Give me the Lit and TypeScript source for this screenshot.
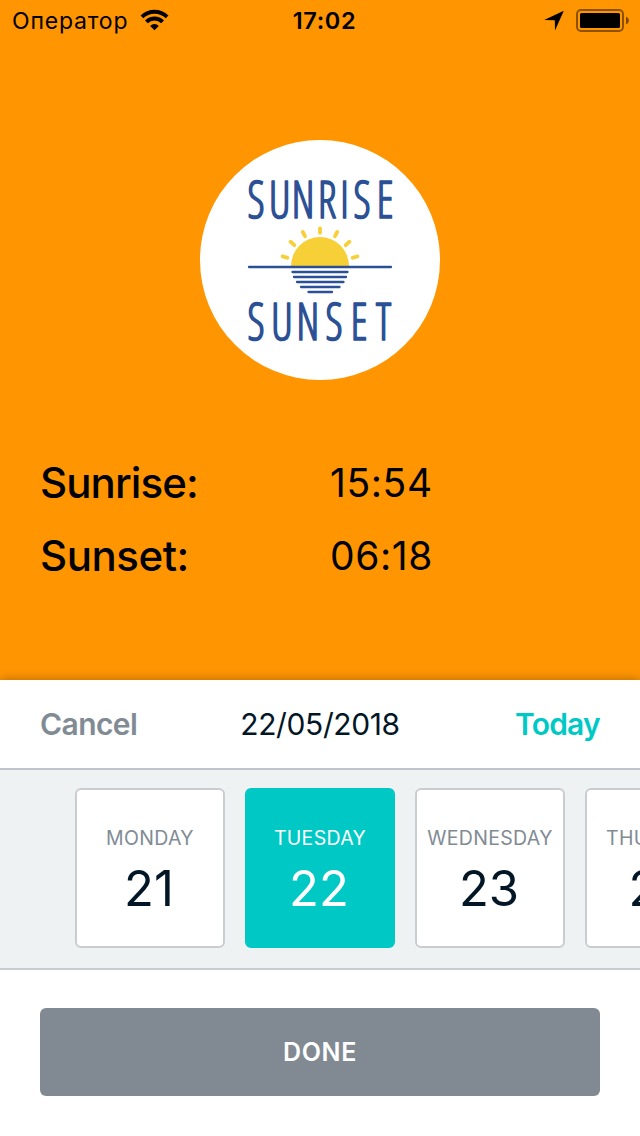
import { LitElement, html, css, svg } from "lit";
import { customElement, property } from "lit/decorators.js";
import { classMap } from "lit/directives/class-map.js";

const base = css`
  :host {
    display: block;
    box-sizing: border-box;
    font-family: Inter, "Noto Sans", sans-serif;
  }
  svg {
    display: block;
  }
`;

@customElement("status-bar")
class StatusBar extends LitElement {
  static styles = [
    base,
    css`
      .bar {
        display: grid;
        grid-template-columns: 1fr auto 1fr;
        align-items: start;
        height: 40px;
        line-height: 42px;
        color: #000;
      }
      .left {
        display: flex;
        gap: 12px;
        padding-left: 12px;
        font-size: 23px;
        letter-spacing: 0.8px;
      }
      .wifi {
        margin-top: 9px;
      }
      .time {
        padding-left: 9px;
        font-size: 23.5px;
        font-weight: 600;
        line-height: 41px;
        letter-spacing: 0.6px;
      }
      .right {
        display: flex;
        justify-content: flex-end;
        gap: 12px;
        padding: 9px 11px 0 0;
      }
    `,
  ];
  render() {
    return html`<div class="bar">
      <div class="left">
        <span>Оператор</span>
        <svg class="wifi" width="29" height="22" viewBox="0 0 29 22">
          <g fill="none" stroke="#000" stroke-width="3.9">
            <path d="M1.9 7.9A18 18 0 0 1 27.1 7.9" />
            <path d="M6.4 12.9A11.2 11.2 0 0 1 22.6 12.9" />
          </g>
          <path d="M10.2 16.9A6 6 0 0 1 18.8 16.9L14.5 21.2Z" />
        </svg>
      </div>
      <div class="time">17:02</div>
      <div class="right">
        <svg width="20" height="22" viewBox="0 0 20 22">
          <path d="M19.8 1.8L11 21.5L10.8 11.2L0.2 11Z" />
        </svg>
        <svg width="53" height="24" viewBox="0 0 53 24">
          <rect x="1" y="1" width="46" height="21" rx="4" fill="none" stroke="#000" stroke-opacity="0.45" stroke-width="2" />
          <rect x="4" y="4" width="40" height="15" rx="1.5" />
          <path d="M50 7.5Q53 9 53 11.5T50 15.5Z" fill-opacity="0.5" />
        </svg>
      </div>
    </div>`;
  }
}

@customElement("sun-logo")
class SunLogo extends LitElement {
  static styles = [
    base,
    css`
      :host {
        width: 240px;
        height: 240px;
        border-radius: 50%;
        background: #fff;
      }
      .word {
        font: 300 condensed 51px "Open Sans", sans-serif;
        fill: #2b5095;
        stroke: #2b5095;
        stroke-width: 1.7px;
        stroke-linejoin: round;
        text-anchor: middle;
      }
      .rays {
        stroke: #f7cf37;
        stroke-width: 3.8;
        stroke-linecap: round;
      }
      .water {
        stroke: #2b5095;
        stroke-width: 2.3;
        stroke-linecap: round;
      }
    `,
  ];
  render() {
    const rays = [
      [120, 88.3, 120, 92.7],
      [102.8, 92, 105, 96.2],
      [137.2, 92, 135, 96.2],
      [90.5, 101.7, 94.3, 105.2],
      [149.5, 101.7, 145.7, 105.2],
      [82.6, 116.4, 87.4, 117.8],
      [157.4, 116.4, 152.6, 117.8],
    ];
    const water = [
      [49, 191, 127],
      [92.5, 147.5, 132],
      [94, 146, 137],
      [97, 143.5, 142],
      [101, 139.5, 147],
      [108.5, 132, 152],
    ];
    // The lettering is narrower than the condensed face, so it is squeezed
    // and each letter is centred on its own position.
    const squeeze = 0.84;
    const xs = (a: number[]) => a.map((v) => (v / squeeze).toFixed(2)).join(" ");
    return html`<svg width="240" height="240" viewBox="0 0 240 240">
      <text class="word" transform="scale(${squeeze} 1)" x=${xs([56, 79.6, 103, 127, 144.5, 162, 185])} y="78.2">SUNRISE</text>
      <g class="rays">
        ${rays.map(([a, b, c, d]) => svg`<line x1=${a} y1=${b} x2=${c} y2=${d}></line>`)}
      </g>
      <path d="M91 126A29 29 0 0 1 149 126Z" fill="#f7cf37" />
      <g class="water">
        ${water.map(([a, b, y]) => svg`<line x1=${a} y1=${y} x2=${b} y2=${y}></line>`)}
      </g>
      <text class="word" transform="scale(${squeeze} 1)" x=${xs([56, 82, 107.7, 134, 159, 183.5])} y="199.8">SUNSET</text>
    </svg>`;
  }
}

@customElement("day-card")
class DayCard extends LitElement {
  @property() name = "";
  @property({ type: Number }) day = 1;
  @property({ type: Boolean }) selected = false;
  static styles = [
    base,
    css`
      .card {
        display: flex;
        flex-direction: column;
        align-items: center;
        gap: 11px;
        box-sizing: border-box;
        width: 150px;
        height: 160px;
        padding-top: 36px;
        border: 2px solid #c9cdd2;
        border-radius: 6px;
        background: #fff;
        color: #031626;
      }
      .name {
        font-size: 19.5px;
        line-height: 24px;
        letter-spacing: 0.32px;
        color: #818b94;
      }
      .day {
        padding-right: 2px;
        font-size: 49px;
        line-height: 56px;
      }
      .on {
        background: #00c9c5;
        border-color: #00c9c5;
        color: #fff;
      }
      .on .name {
        color: #fff;
      }
    `,
  ];
  render() {
    return html`<div class=${classMap({ card: true, on: this.selected })}>
      <span class="name">${this.name}</span>
      <span class="day">${this.day}</span>
    </div>`;
  }
}

@customElement("app-root")
class AppRoot extends LitElement {
  static styles = [
    base,
    css`
      :host {
        display: flex;
        flex-direction: column;
        height: 1136px;
        overflow: hidden;
        background: #ff9500;
      }
      .main {
        display: flex;
        flex-direction: column;
        height: 640px;
      }
      .logo {
        margin: 100px auto 66px;
      }
      .row {
        display: grid;
        grid-template-columns: 290px 1fr;
        height: 73px;
        padding-left: 40px;
        line-height: 74px;
        font-size: 39px;
        letter-spacing: 0.6px;
        color: #000;
      }
      .label {
        font-size: 42px;
        font-weight: 500;
        line-height: 73px;
        letter-spacing: -0.9px;
      }
      .label.wide {
        letter-spacing: -0.45px;
      }
      .sheet {
        height: 456px;
        background: #fff;
        box-shadow: 0 0 10px rgba(0, 0, 0, 0.3);
      }
      .head {
        display: grid;
        grid-template-columns: 1fr auto 1fr;
        height: 88px;
        padding: 0 40px;
        border-bottom: 2px solid #bdc5cb;
        font-size: 30px;
        line-height: 88px;
      }
      .cancel {
        font-weight: 600;
        letter-spacing: -0.6px;
        color: #818b94;
      }
      .date {
        letter-spacing: -0.4px;
        color: #031626;
      }
      .today {
        font-weight: 600;
        letter-spacing: -0.75px;
        text-align: right;
        color: #00c9c5;
      }
      .strip {
        display: flex;
        gap: 20px;
        height: 198px;
        padding: 18px 0 0 75px;
        box-sizing: border-box;
        overflow: hidden;
        background: #eef2f3;
      }
      .foot {
        border-top: 2px solid #c9cdd2;
        padding: 38px 40px 40px;
      }
      .done {
        display: block;
        width: 100%;
        height: 88px;
        padding: 0;
        border: 0;
        border-radius: 6px;
        background: #818a92;
        color: #fff;
        font: 600 25px/88px Inter, sans-serif;
        letter-spacing: 0.6px;
      }
    `,
  ];
  render() {
    const days: [string, number][] = [
      ["MONDAY", 21],
      ["TUESDAY", 22],
      ["WEDNESDAY", 23],
      ["THURSDAY", 24],
    ];
    return html`
      <status-bar></status-bar>
      <div class="main">
        <sun-logo class="logo"></sun-logo>
        <div class="row"><span class="label">Sunrise:</span><span>15:54</span></div>
        <div class="row"><span class="label wide">Sunset:</span><span>06:18</span></div>
      </div>
      <div class="sheet">
        <div class="head">
          <span class="cancel">Cancel</span>
          <span class="date">22/05/2018</span>
          <span class="today">Today</span>
        </div>
        <div class="strip">
          ${days.map(([n, d]) => html`<day-card .name=${n} .day=${d} ?selected=${d === 22}></day-card>`)}
        </div>
        <div class="foot"><button class="done">DONE</button></div>
      </div>
    `;
  }
}
